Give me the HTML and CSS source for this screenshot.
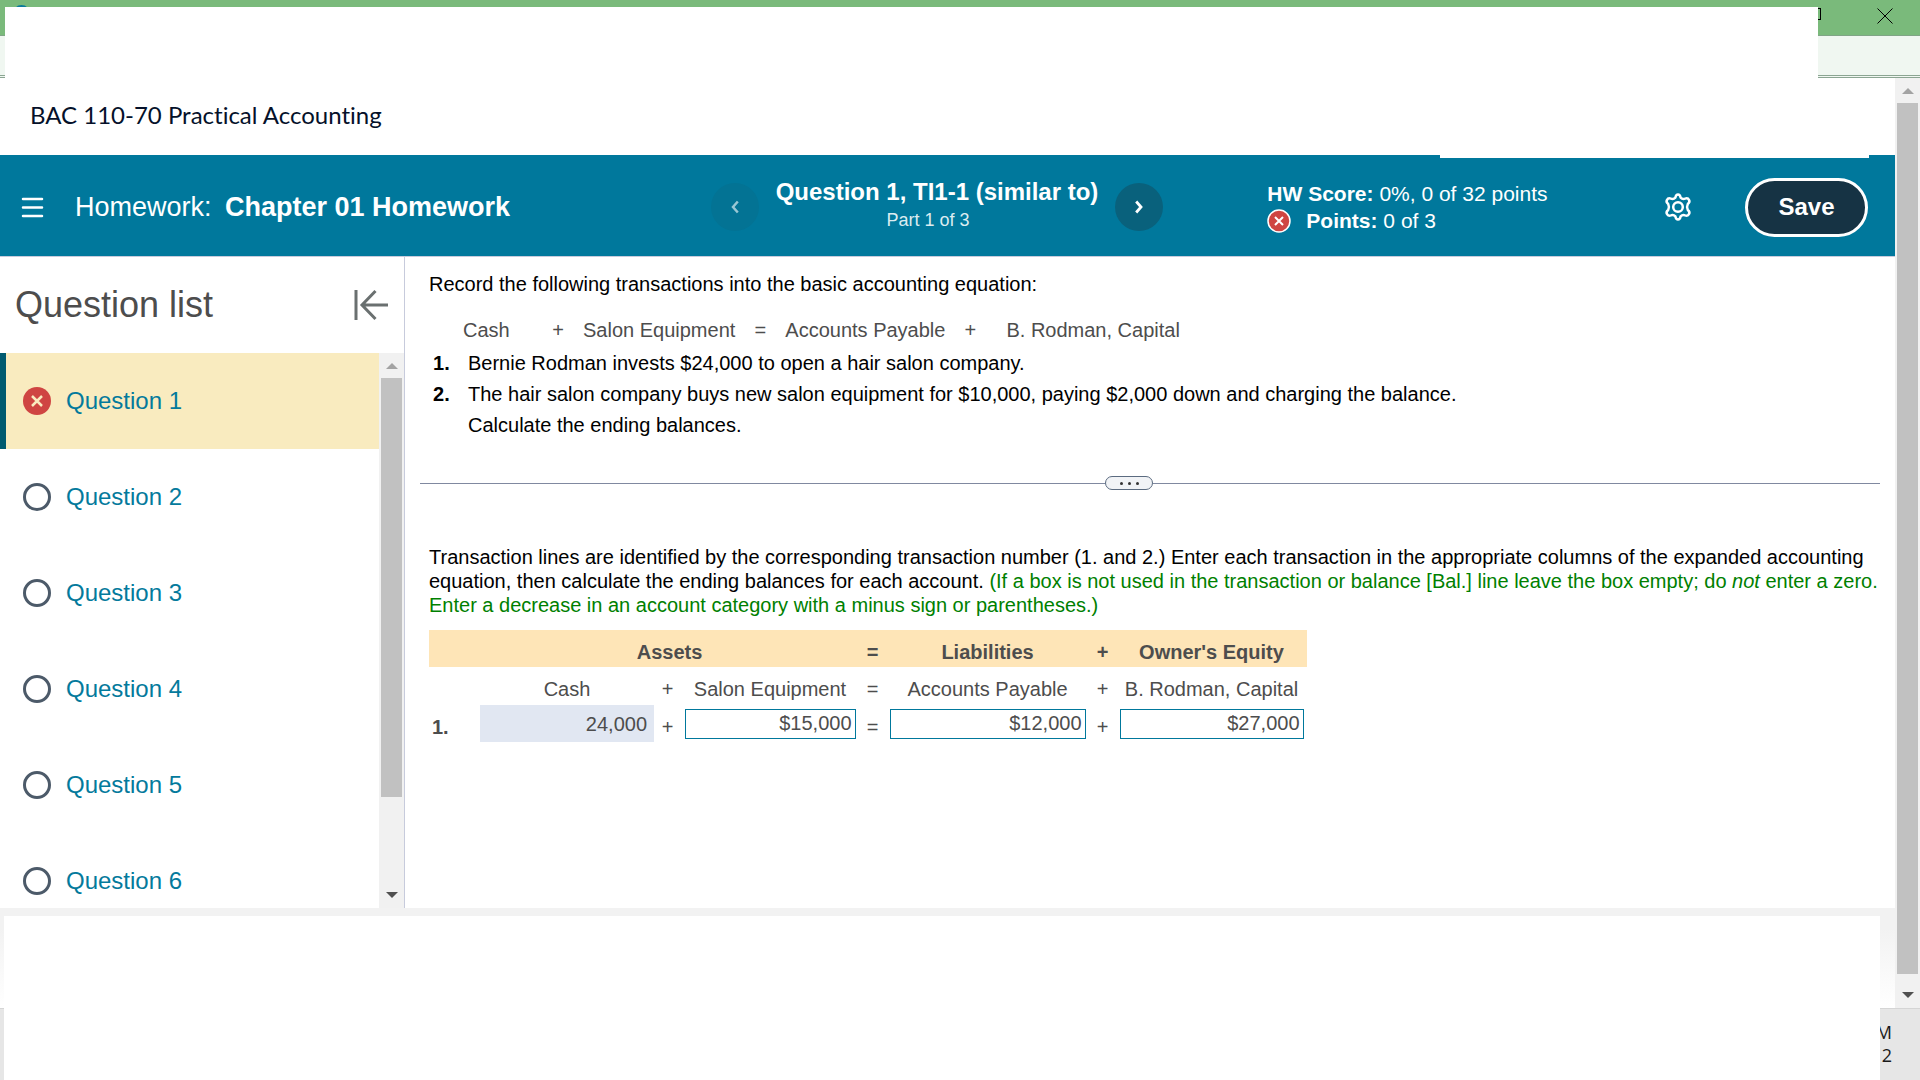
FILE: index.html
```
<!DOCTYPE html>
<html lang="en">
<head>
    <meta charset="UTF-8">
    <meta name="viewport" content="width=device-width, initial-scale=1.0">
    <title>Chapter 01 Homework</title>
    <link rel="stylesheet" href="styles.css">
</head>
<body>
    <div class="window-top">
        <div class="titlebar">
            <span class="app-logo"></span>
            <svg class="restore-icon" width="16" height="16" viewBox="0 0 16 16" fill="none" stroke="#000" shape-rendering="crispEdges">
                <path d="M3.5 3.5v-3h10v11h-3M0.500 3.500h10v11h-10z"/>
            </svg>
            <svg class="close-icon" width="16" height="16" viewBox="0 0 16 16" stroke="#000">
                <path d="M0.500 0.500l15 15M15.500 0.500l-15 15"/>
            </svg>
        </div>
        <div class="addressbar"></div>
        <div class="window-cover"></div>
    </div>

    <div class="viewport">
        <div class="page">
            <div class="course">BAC 110-70 Practical Accounting</div>

            <header class="header">
                <div class="header-cover"></div>
                <div class="header-left">
                    <button class="icon-button" aria-label="Menu">
                        <svg width="23" height="21" viewBox="0 0 23 21" stroke="#fff" stroke-width="2.500" stroke-linecap="round">
                            <path d="M2 2h19M2 10.500h19M2 19h19"/>
                        </svg>
                    </button>
                    <h1>Homework: <strong>Chapter 01 Homework</strong></h1>
                </div>
                <div class="question-nav">
                    <button class="round-button disabled" aria-label="Previous question" disabled>
                        <svg width="8" height="14" viewBox="0 0 8 14" fill="none" stroke="#fff" stroke-width="2.500">
                            <path d="M6.800 1.500L2 7l4.800 5.500"/>
                        </svg>
                    </button>
                    <div class="question-title">
                        <h2>Question 1, TI1-1 (similar to)</h2>
                        <p>Part 1 of 3</p>
                    </div>
                    <button class="round-button" aria-label="Next question">
                        <svg width="8" height="14" viewBox="0 0 8 14" fill="none" stroke="#fff" stroke-width="2.800">
                            <path d="M1.200 1.500L6 7l-4.800 5.500"/>
                        </svg>
                    </button>
                </div>
                <div class="header-right">
                    <div class="score">
                        <div><b>HW Score:</b> 0%, 0 of 32 points</div>
                        <div class="points">
                            <svg width="24" height="24" viewBox="0 0 24 24">
                                <circle cx="12" cy="12" r="11" fill="#cf4542" stroke="#fff" stroke-width="1.500"/>
                                <path d="M8 8l8 8M16 8l-8 8" stroke="#fff" stroke-width="2"/>
                            </svg>
                            <span><b>Points:</b> 0 of 3</span>
                        </div>
                    </div>
                    <button class="icon-button settings" aria-label="Settings">
                        <svg width="28" height="28" viewBox="0 0 28 28" fill="none" stroke="#fff" stroke-width="2.500" stroke-linejoin="round">
                            <path d="M11.400 4.600Q12 1.500 14 1.500T16.600 4.600Q18.500 6.500 21.100 5.600Q24 4.700 25 7Q26.300 9 23.800 11Q22.300 14 23.800 17Q26.300 19 25 21Q24 23.300 21.100 22.400Q18.500 21.500 16.600 23.400Q16 26.500 14 26.500T11.400 23.400Q9.500 21.500 6.900 22.400Q4 23.300 3 21Q1.700 19 4.200 17Q5.700 14 4.200 11Q1.700 9 3 7Q4 4.700 6.900 5.600Q9.500 6.500 11.400 4.600z"/>
                            <circle cx="14" cy="14" r="4.800"/>
                        </svg>
                    </button>
                    <button class="save-button">Save</button>
                </div>
            </header>

            <div class="main">
                <aside class="sidebar">
                    <div class="sidebar-head">
                        <h2>Question list</h2>
                        <button class="icon-button" aria-label="Collapse question list">
                            <svg width="34" height="32" viewBox="0 0 34 32" fill="none" stroke="#6a7070" stroke-width="3">
                                <path d="M2 1v30M34 16H9M21.500 2L8 16l13.500 14"/>
                            </svg>
                        </button>
                    </div>
                    <div class="question-scroll">
                        <ul class="question-list">
                            <li class="active">
                                <svg width="28" height="28" viewBox="0 0 28 28">
                                    <circle cx="14" cy="14" r="14" fill="#cf4542"/>
                                    <path d="M9 9l10 10M19 9l-10 10" stroke="#f9ebbf" stroke-width="2.500"/>
                                </svg>
                                <a href="#">Question 1</a>
                            </li>
                            <li><span class="open-circle"></span><a href="#">Question 2</a></li>
                            <li><span class="open-circle"></span><a href="#">Question 3</a></li>
                            <li><span class="open-circle"></span><a href="#">Question 4</a></li>
                            <li><span class="open-circle"></span><a href="#">Question 5</a></li>
                            <li><span class="open-circle"></span><a href="#">Question 6</a></li>
                        </ul>
                        <div class="scrollbar">
                            <span class="arrow-up"></span>
                            <div class="track list-track"><div class="thumb"></div></div>
                            <span class="arrow-down"></span>
                        </div>
                    </div>
                </aside>

                <main class="content">
                    <section class="problem">
                        <p>Record the following transactions into the basic accounting equation:</p>
                        <div class="equation">
                            <span class="eq-cash">Cash</span>
                            <span class="eq-sign">+</span>
                            <span>Salon Equipment</span>
                            <span class="eq-sign">=</span>
                            <span>Accounts Payable</span>
                            <span class="eq-sign">+</span>
                            <span class="eq-capital">B. Rodman, Capital</span>
                        </div>
                        <ol class="transactions">
                            <li>Bernie Rodman invests $24,000 to open a hair salon company.</li>
                            <li>The hair salon company buys new salon equipment for $10,000, paying $2,000 down and charging the balance.<br>Calculate the ending balances.</li>
                        </ol>
                    </section>

                    <div class="divider">
                        <button class="divider-handle" aria-label="Resize"><i></i><i></i><i></i></button>
                    </div>

                    <section class="answer">
                        <p>Transaction lines are identified by the corresponding transaction number (1. and 2.) Enter each transaction in the appropriate columns of the expanded accounting equation, then calculate the ending balances for each account. <span class="hint">(If a box is not used in the transaction or balance [Bal.] line leave the box empty; do <em>not</em> enter a zero. Enter a decrease in an account category with a minus sign or parentheses.)</span></p>
                        <table class="answer-table">
                            <colgroup>
                                <col class="col-number">
                                <col class="col-cash">
                                <col class="col-sign">
                                <col class="col-equipment">
                                <col class="col-sign">
                                <col class="col-payable">
                                <col class="col-sign">
                                <col class="col-capital">
                            </colgroup>
                            <thead>
                                <tr>
                                    <th></th>
                                    <th colspan="3">Assets</th>
                                    <th>=</th>
                                    <th>Liabilities</th>
                                    <th>+</th>
                                    <th>Owner's Equity</th>
                                </tr>
                            </thead>
                            <tbody>
                                <tr class="accounts">
                                    <td></td>
                                    <td>Cash</td>
                                    <td>+</td>
                                    <td id="equipment">Salon Equipment</td>
                                    <td>=</td>
                                    <td id="payable">Accounts Payable</td>
                                    <td>+</td>
                                    <td id="capital">B. Rodman, Capital</td>
                                </tr>
                                <tr class="entry">
                                    <td class="number">1.</td>
                                    <td class="filled">24,000</td>
                                    <td>+</td>
                                    <td><input type="text" value="$15,000" aria-labelledby="equipment"></td>
                                    <td>=</td>
                                    <td><input type="text" value="$12,000" aria-labelledby="payable"></td>
                                    <td>+</td>
                                    <td><input type="text" value="$27,000" aria-labelledby="capital"></td>
                                </tr>
                            </tbody>
                        </table>
                    </section>
                </main>
            </div>

            <div class="page-bottom"></div>
        </div>

        <div class="scrollbar page-scrollbar">
            <span class="arrow-up"></span>
            <div class="track page-track"><div class="thumb"></div></div>
            <span class="arrow-down"></span>
        </div>
    </div>

    <footer class="taskbar">
        <div class="clock">
            <span>M</span>
            <span>2</span>
        </div>
    </footer>
    <div class="bottom-cover"></div>
</body>
</html>
```

FILE: styles.css
```
* {
    box-sizing: border-box;
}
body {
    margin: 0;
    height: 100vh;
    display: flex;
    flex-direction: column;
    position: relative;
    overflow: hidden;
    font-family: "Liberation Sans", Arial, sans-serif;
    font-size: 20px;
    line-height: 24px;
    color: #000;
    background-color: white;
}
h1, h2, p, ul, ol {
    margin: 0;
    padding: 0;
}
button {
    font-family: inherit;
    padding: 0;
    border: none;
    cursor: pointer;
}

/* window frame */
.window-top {
    position: relative;
    flex: none;
}
.titlebar {
    display: flex;
    justify-content: flex-end;
    gap: 54px;
    height: 36px;
    padding: 8px 27px 0 0;
    background-color: #7aba7b;
    border-bottom: 1px solid #80a586;
}
.app-logo {
    position: absolute;
    left: 13px;
    top: 5px;
    width: 17px;
    height: 17px;
    border-radius: 50%;
    background-color: #0b7b9c;
}
.addressbar {
    height: 42px;
    background-color: #f0f7f1;
    border-bottom: 3px double #8ba592;
}
.window-cover {
    position: absolute;
    left: 5px;
    right: 102px;
    top: 7px;
    bottom: 0;
    background-color: white;
}

/* page */
.viewport {
    flex: 1;
    min-height: 0;
    display: flex;
}
.page {
    flex: 1;
    min-width: 0;
    display: flex;
    flex-direction: column;
}
.course {
    height: 77px;
    flex: none;
    padding-left: 30px;
    font-family: Lato, sans-serif;
    font-size: 24px;
    font-variant-ligatures: none;
    line-height: 74px;
    color: #05112a;
}

/* header */
.header {
    position: relative;
    flex: none;
    display: grid;
    grid-template-columns: 37.5% auto 1fr;
    align-items: center;
    height: 102px;
    padding-top: 3px;
    color: white;
    background-color: #00789c;
    border-bottom: 1px solid #c7cbdc;
}
.header-cover {
    position: absolute;
    top: 0;
    right: 26px;
    width: 429px;
    height: 3px;
    background-color: white;
}
.header-left {
    display: flex;
    align-items: center;
    gap: 31px;
    padding-left: 21px;
}
.header h1 {
    font-size: 27px;
    font-weight: normal;
    line-height: 32px;
}
.header h1 strong {
    margin-left: 6px;
}
.icon-button {
    display: flex;
    background: none;
}
.question-nav {
    display: flex;
    align-items: center;
    gap: 17px;
}
.round-button {
    display: flex;
    align-items: center;
    justify-content: center;
    width: 48px;
    height: 48px;
    border-radius: 50%;
    background-color: #09617c;
}
.round-button.disabled {
    background-color: #037394;
}
.round-button.disabled svg {
    opacity: 0.6;
}
.question-title {
    text-align: center;
    padding-bottom: 6px;
}
.question-title h2 {
    font-size: 24px;
    line-height: 32px;
}
.question-title p {
    padding-right: 18px;
    font-size: 18px;
    color: #dcecf1;
}
.header-right {
    display: flex;
    align-items: center;
    padding: 0 27px 0 104px;
}
.score {
    font-size: 21px;
    line-height: 27px;
}
.points {
    display: flex;
    align-items: center;
    gap: 15px;
}
.settings {
    margin-left: auto;
}
.save-button {
    width: 123px;
    height: 59px;
    margin-left: 53px;
    border: 3px solid white;
    border-radius: 30px;
    font-size: 24px;
    font-weight: bold;
    color: white;
    background-color: #163344;
}

/* question list */
.main {
    flex: 1;
    min-height: 0;
    display: flex;
}
.sidebar {
    flex: none;
    display: flex;
    flex-direction: column;
    width: 405px;
    border-right: 1px solid #c7cbdc;
}
.sidebar-head {
    display: flex;
    align-items: center;
    justify-content: space-between;
    height: 96px;
    flex: none;
    padding: 0 16px 0 15px;
}
.sidebar-head h2 {
    font-size: 36px;
    font-weight: normal;
    color: #4d4d4d;
}
.question-scroll {
    flex: 1;
    min-height: 0;
    display: flex;
}
.question-list {
    flex: 1;
    list-style: none;
    overflow: hidden;
}
.question-list li {
    display: flex;
    align-items: center;
    gap: 15px;
    height: 96px;
    padding-left: 17px;
    border-left: 6px solid transparent;
    font-size: 24px;
}
.question-list li.active {
    background-color: #f9ebbf;
    border-left-color: #005a70;
}
.question-list a {
    color: #047a9c;
    text-decoration: none;
}
.open-circle {
    width: 28px;
    height: 28px;
    border: 3px solid #4c5a69;
    border-radius: 50%;
}

/* scrollbars */
.scrollbar {
    flex: none;
    display: flex;
    flex-direction: column;
    align-items: center;
    width: 25px;
    padding: 10px 2px;
    background-color: #f1f1f1;
}
.arrow-up, .arrow-down {
    width: 12px;
    height: 6px;
    border: 6px solid transparent;
    border-top: none;
    border-bottom-color: #a3a3a3;
}
.arrow-down {
    border-top: 6px solid #505050;
    border-bottom: none;
}
.track {
    flex: 1;
    width: 100%;
    margin: 9px 0;
}
.thumb {
    background-color: #c1c1c1;
}
.list-track .thumb {
    height: 83%;
}
.page-track .thumb {
    height: 99%;
}

/* problem */
.content {
    flex: 1;
    min-width: 0;
    padding: 15px 15px 0;
}
.problem {
    padding-left: 9px;
}
.equation {
    display: flex;
    padding: 22px 0 6px 34px;
    color: #4d4d4d;
}
.eq-cash {
    width: 70px;
}
.eq-sign {
    width: 50px;
    text-align: center;
}
.eq-capital {
    padding-left: 11px;
}
.transactions {
    list-style: none;
    counter-reset: transaction;
    line-height: 31px;
}
.transactions li {
    position: relative;
    padding-left: 39px;
    counter-increment: transaction;
}
.transactions li::before {
    content: counter(transaction) ".";
    position: absolute;
    left: 4px;
    font-weight: bold;
}
.divider {
    display: flex;
    align-items: center;
    margin-top: 35px;
}
.divider::before, .divider::after {
    content: "";
    height: 1px;
    flex: 685;
    background-color: #8089a0;
}
.divider::after {
    flex: 727;
}
.divider-handle {
    display: flex;
    align-items: center;
    justify-content: center;
    gap: 5px;
    width: 48px;
    height: 14px;
    border: 1px solid #5b6b80;
    border-radius: 7px;
    background-color: #f1f3f6;
}
.divider-handle i {
    width: 3px;
    height: 3px;
    border-radius: 50%;
    background-color: #333;
}

/* answer area */
.answer {
    padding: 55px 0 0 9px;
}
.hint {
    color: #008000;
}
.answer-table {
    margin-top: 13px;
    table-layout: fixed;
    width: 878px;
    border-collapse: collapse;
    color: #4d4d4d;
}
.col-number {
    width: 51px;
}
.col-cash {
    width: 174px;
}
.col-sign {
    width: 27px;
}
.col-equipment {
    width: 178px;
}
.col-payable {
    width: 203px;
}
.answer-table th, .answer-table td {
    height: 37px;
    padding: 6px 0 0;
    text-align: center;
    white-space: nowrap;
}
.answer-table th {
    background-color: #fee5b7;
}
.answer-table .accounts td {
    height: 38px;
}
.answer-table .number {
    padding-left: 3px;
    text-align: left;
    font-weight: bold;
}
.answer-table .filled {
    padding: 0 7px 0 0;
    text-align: right;
    background-color: #e1e7f2;
}
.answer-table .entry td:nth-child(even) {
    padding-top: 0;
}
.answer-table input {
    display: block;
    width: calc(100% - 7px);
    height: 30px;
    margin: 0 auto;
    padding: 0 3px;
    border: 1px solid #00789c;
    font-family: inherit;
    font-size: 20px;
    text-align: right;
    color: #4d4d4d;
}

/* bottom of the screen */
.page-bottom {
    flex: none;
    height: 100px;
    background: linear-gradient(#f2f2f2 20%, white);
}
.taskbar {
    flex: none;
    display: flex;
    justify-content: flex-end;
    height: 72px;
    padding: 12px 28px 0 0;
    border-top: 1px solid #d5d5d5;
    background-color: #e6e6e6;
}
.clock {
    display: flex;
    flex-direction: column;
    align-items: flex-end;
    font-family: "Open Sans", sans-serif;
    font-size: 18px;
    line-height: 23px;
    color: #1a1a1a;
}
.bottom-cover {
    position: absolute;
    left: 4px;
    right: 40px;
    bottom: 0;
    height: 164px;
    background-color: white;
}
```
